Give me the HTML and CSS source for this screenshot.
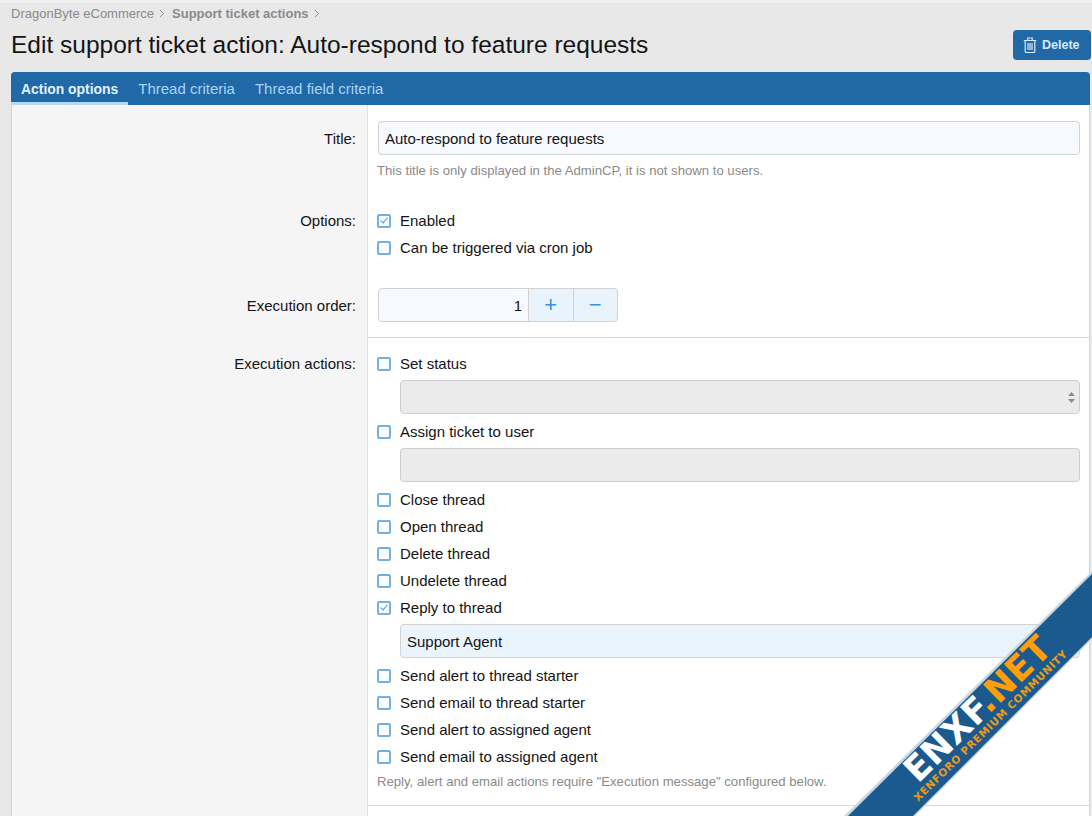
FILE: index.html
```html
<!DOCTYPE html>
<html lang="en">
<head>
    <meta charset="UTF-8">
    <title>Edit support ticket action</title>
    <link rel="stylesheet" href="styles.css">
</head>
<body>

<div class="breadcrumbs">
    <a href="#">DragonByte eCommerce</a>
    <svg class="crumb-arrow" viewBox="0 0 6 9"><path d="M1 1l3.5 3.5L1 8"/></svg>
    <a href="#" class="current">Support ticket actions</a>
    <svg class="crumb-arrow" viewBox="0 0 6 9"><path d="M1 1l3.5 3.5L1 8"/></svg>
</div>

<div class="page-header">
    <h1>Edit support ticket action: Auto-respond to feature requests</h1>
    <button type="button" class="delete-button">
        <svg class="trash-icon" viewBox="0 0 14 16">
            <path d="M.8 3.5h12.4M4.8 3.5V1h4.4v2.5M2.2 3.5v10.7c0 .8.5 1.3 1.3 1.3h7c.8 0 1.3-.5 1.3-1.3V3.5M5 6v7M7 6v7M9 6v7"/>
        </svg>
        Delete
    </button>
</div>

<form class="panel">
    <div class="tabs">
        <a href="#" class="tab active">Action options</a>
        <a href="#" class="tab">Thread criteria</a>
        <a href="#" class="tab">Thread field criteria</a>
    </div>

    <div class="row row-title">
        <div class="row-label">Title:</div>
        <div class="row-field">
            <input type="text" class="text-input" value="Auto-respond to feature requests">
            <p class="hint">This title is only displayed in the AdminCP, it is not shown to users.</p>
        </div>
    </div>

    <div class="row row-options">
        <div class="row-label">Options:</div>
        <div class="row-field">
            <label class="check checked">Enabled</label>
            <label class="check">Can be triggered via cron job</label>
        </div>
    </div>

    <div class="row row-order">
        <div class="row-label">Execution order:</div>
        <div class="row-field">
            <div class="number-box">
                <input type="text" class="number-input" value="1">
                <button type="button" class="step">+</button>
                <button type="button" class="step">&minus;</button>
            </div>
        </div>
    </div>

    <div class="row row-actions">
        <div class="row-label">Execution actions:</div>
        <div class="row-field">
            <label class="check">Set status</label>
            <div class="sub-field select-box">
                <svg class="select-arrows" viewBox="0 0 7 11"><path d="M3.5 0L7 4H0zM3.5 11L0 7h7z"/></svg>
            </div>
            <label class="check">Assign ticket to user</label>
            <div class="sub-field">
                <input type="text" class="text-input disabled" disabled>
            </div>
            <label class="check">Close thread</label>
            <label class="check">Open thread</label>
            <label class="check">Delete thread</label>
            <label class="check">Undelete thread</label>
            <label class="check checked">Reply to thread</label>
            <div class="sub-field">
                <input type="text" class="text-input blue" value="Support Agent">
            </div>
            <label class="check">Send alert to thread starter</label>
            <label class="check">Send email to thread starter</label>
            <label class="check">Send alert to assigned agent</label>
            <label class="check">Send email to assigned agent</label>
            <p class="hint hint-actions">Reply, alert and email actions require "Execution message" configured below.</p>
        </div>
    </div>

    <div class="row row-rest">
        <div class="row-label"></div>
        <div class="row-field"></div>
    </div>
</form>

<!-- watermark -->
<svg class="ribbon" viewBox="0 0 250 246">
    <polygon class="ribbon-edge" points="250,1 2,246 73,246 250,69"/>
    <polygon class="ribbon-band" points="250,4 6,246 71,246 250,67"/>
    <text class="ribbon-main" transform="translate(76 214) rotate(-44.5)" textLength="190">ENXF<tspan class="orange">.NET</tspan></text>
    <text class="ribbon-sub" transform="translate(76 232) rotate(-44.5)" textLength="210">XENFORO PREMIUM COMMUNITY</text>
</svg>

</body>
</html>
```

FILE: styles.css
```css
/* Reset & Base Styles */
* {
    box-sizing: border-box;
    margin: 0;
    padding: 0;
}

html {
    height: 100%;
    overflow: hidden;
}

body {
    position: relative;
    height: 816px;
    overflow: hidden;
    font-family: "Liberation Sans", Arial, sans-serif;
    font-size: 15px;
    color: #141414;
    background-color: #e8e8e8;
    border-top: 3px solid #efefef;
    padding: 0 1px 0 11px;
}

/* Header */
.breadcrumbs {
    display: flex;
    align-items: center;
    height: 20px;
    font-size: 13px;
    color: #8a8a8a;
}

.breadcrumbs a {
    color: #8a8a8a;
    text-decoration: none;
}

.breadcrumbs .current {
    font-weight: bold;
}

.crumb-arrow {
    width: 6px;
    height: 9px;
    margin: 0 7px 0 5px;
    fill: none;
    stroke: #8f8f8f;
    stroke-width: 1;
}

.page-header {
    display: flex;
    justify-content: space-between;
    align-items: center;
    height: 49px;
    padding-bottom: 5px;
}

h1 {
    font-size: 24.5px;
    font-weight: normal;
    color: #141414;
}

.delete-button {
    display: flex;
    align-items: center;
    gap: 5px;
    width: 78px;
    height: 30px;
    padding-left: 10px;
    font-family: inherit;
    font-size: 12.5px;
    font-weight: bold;
    color: #d8ebfa;
    background-color: #2068a6;
    border: none;
    border-radius: 4px;
}

.trash-icon {
    width: 14px;
    height: 16px;
    fill: none;
    stroke: #d8ebfa;
    stroke-width: 1.2;
}

/* Panel */
.panel {
    width: 1079px;
    height: 760px;
    background-color: #f5f5f5;
    border: 1px solid #d4d4d4;
    border-top: none;
    border-radius: 4px 4px 0 0;
}

.tabs {
    display: flex;
    height: 33px;
    margin: 0 -1px;
    background-color: #2068a6;
    border-radius: 4px 4px 0 0;
}

.tab {
    padding: 8px 10px 0;
    font-size: 15px;
    color: #a9d5f7;
    text-decoration: none;
}

.tab.active {
    font-weight: bold;
    color: #e3f1fc;
    font-size: 13.9px;
    padding-top: 9px;
    border-bottom: 3px solid #b5daf3;
}

.row {
    display: flex;
}

.row-label {
    flex: 0 0 355px;
    padding-right: 11px;
    text-align: right;
}

.row-field {
    flex: 1;
    padding-right: 9px;
    padding-left: 10px;
    background-color: #fff;
    border-left: 1px solid #e2e2e2;
}

.row-title .row-label {
    padding-top: 25px;
}

.row-title .row-field {
    padding-top: 16px;
    padding-bottom: 29px;
}

.row-options .row-label {
    padding-top: 5px;
}

.row-options .row-field {
    padding-bottom: 27px;
}

.row-order .row-label {
    padding-top: 9px;
}

.row-order .row-field {
    padding-bottom: 15px;
}

.row-actions .row-label {
    padding-top: 18px;
}

.row-actions .row-field {
    padding-top: 12px;
    padding-bottom: 16px;
    border-top: 1px solid #d9d9d9;
}

.row-rest .row-field {
    height: 20px;
    border-top: 1px solid #d9d9d9;
}

/* Inputs */
.text-input {
    display: block;
    width: 100%;
    height: 34px;
    padding: 1px 6px 0;
    font-family: inherit;
    font-size: 15px;
    color: #141414;
    background-color: #f6f9fe;
    border: 1px solid #d2d2d2;
    border-radius: 4px;
    outline: none;
}

.text-input.disabled {
    background-color: #ebebeb;
    border-color: #cdcdcd;
}

.text-input.blue {
    background-color: #eaf4fd;
}

.hint {
    margin: 8px 0 0 -1px;
    font-size: 13.15px;
    line-height: 15px;
    color: #8a8a8a;
}

.hint-actions {
    margin-top: 4px;
}

.check {
    position: relative;
    display: block;
    height: 27px;
    padding-left: 22px;
    line-height: 27px;
}

.check::before {
    content: "";
    position: absolute;
    left: -1px;
    top: 7px;
    box-sizing: border-box;
    width: 14px;
    height: 14px;
    background-color: #fafcff;
    border: 2px solid #74b0e3;
    border-radius: 2px;
}

.check.checked::after {
    content: "";
    position: absolute;
    left: 4px;
    top: 9px;
    width: 3px;
    height: 6px;
    border: solid #4a93d4;
    border-width: 0 1.5px 1.5px 0;
    transform: rotate(40deg);
}

.sub-field {
    margin: 3px 0 4px 22px;
}

.select-box {
    display: flex;
    justify-content: flex-end;
    align-items: center;
    height: 34px;
    padding-right: 4px;
    background-color: #ebebeb;
    border: 1px solid #cdcdcd;
    border-radius: 4px;
}

.select-arrows {
    width: 7px;
    height: 11px;
    fill: #8a8a8a;
}

.number-box {
    display: flex;
    width: 240px;
    height: 34px;
    background-color: #e9f3fc;
    border: 1px solid #d2d2d2;
    border-radius: 4px;
}

.number-input {
    width: 149px;
    padding: 0 6px;
    font-family: inherit;
    font-size: 15px;
    color: #141414;
    text-align: right;
    background-color: #f6f9fe;
    border: none;
    border-radius: 4px 0 0 4px;
    outline: none;
}

.step {
    flex: 1;
    font-family: inherit;
    font-size: 22px;
    line-height: 1;
    color: #3c92d8;
    background: none;
    border: none;
    border-left: 1px solid #d2d2d2;
}

/* Watermark */
.ribbon {
    position: absolute;
    right: 0;
    bottom: 0;
    width: 250px;
    height: 246px;
}

.ribbon-edge {
    fill: #ccd6de;
}

.ribbon-band {
    fill: #1b5a8e;
}

.ribbon-main {
    font-family: "DejaVu Sans", sans-serif;
    font-size: 35px;
    font-weight: bold;
    fill: #fff;
}

.orange {
    fill: #ff9d0a;
}

.ribbon-sub {
    font-family: "DejaVu Sans", sans-serif;
    font-size: 10.5px;
    font-weight: bold;
    fill: #ee9a14;
}
```
